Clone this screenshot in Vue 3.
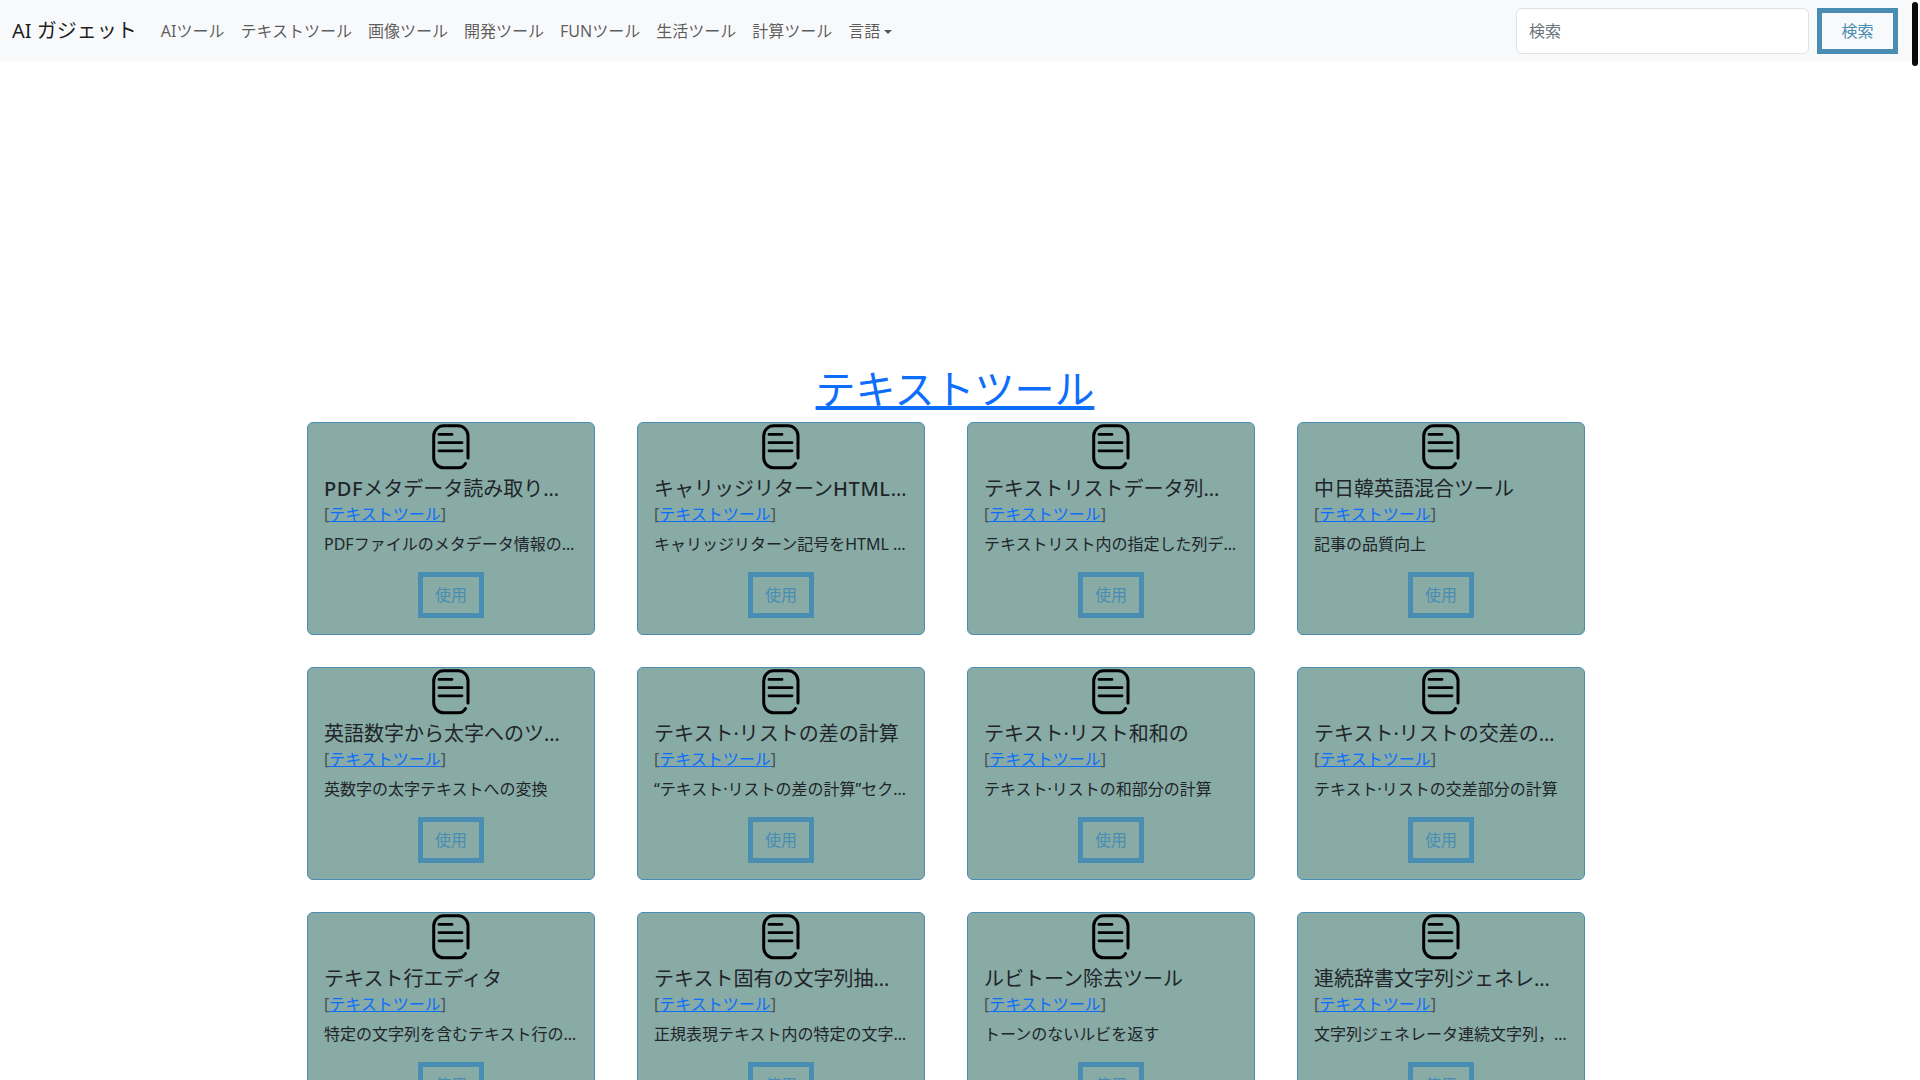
<template>
  <div class="page">
    <nav class="navbar">
      <a class="brand" href="#">AI ガジェット</a>
      <ul class="nav-list">
        <li v-for="item in navItems" :key="item"><a class="nav-link" href="#">{{ item }}</a></li>
        <li>
          <a class="nav-link dropdown" href="#">言語<span class="caret"></span></a>
        </li>
      </ul>
      <form class="search" @submit.prevent>
        <input class="search-input" type="search" placeholder="検索" />
        <button class="outline-btn search-btn" type="submit">検索</button>
      </form>
    </nav>

    <div class="ad-slot"></div>

    <main class="content">
      <h1 class="page-title"><a href="#">テキストツール</a></h1>
      <div class="tool-grid">
        <div v-for="tool in tools" :key="tool.title" class="tool-card">
          <svg class="tool-icon" viewBox="0 0 48 48" fill="none" stroke="#000" stroke-width="3" stroke-linecap="round">
            <path d="M38.500 40.500c-1.500 2.600-3.500 4.300-6.500 4.300H16.700a10 10 0 0 1-10-10V12.800a10 10 0 0 1 10-10H31a10 10 0 0 1 10 10V35" />
            <path d="M12 11.400h13M12 19.700h23M12 27.800h23" stroke-width="2.800" />
          </svg>
          <h5 class="tool-title">
            <span v-for="(part, i) in splitLatin(tool.title)" :key="i" :class="{ latin: i % 2 === 1 }">{{ part }}</span>
          </h5>
          <div class="tool-tag">[<a href="#">テキストツール</a>]</div>
          <p class="tool-desc">{{ tool.desc }}</p>
          <div class="tool-action">
            <button class="outline-btn" type="button">使用</button>
          </div>
        </div>
      </div>
    </main>

    <div class="scroll-thumb"></div>
  </div>
</template>

<script setup>
const navItems = ['AIツール', 'テキストツール', '画像ツール', '開発ツール', 'FUNツール', '生活ツール', '計算ツール']

const tools = [
  { title: 'PDFメタデータ読み取りツール', desc: 'PDFファイルのメタデータ情報の読み取り' },
  { title: 'キャリッジリターンHTML変換', desc: 'キャリッジリターン記号をHTML タグに変換' },
  { title: 'テキストリストデータ列抽出', desc: 'テキストリスト内の指定した列データの抽出' },
  { title: '中日韓英語混合ツール', desc: '記事の品質向上' },
  { title: '英語数字から太字へのツール', desc: '英数字の太字テキストへの変換' },
  { title: 'テキスト·リストの差の計算', desc: '“テキスト·リストの差の計算”セクション' },
  { title: 'テキスト·リスト和和の', desc: 'テキスト·リストの和部分の計算' },
  { title: 'テキスト·リストの交差の計算', desc: 'テキスト·リストの交差部分の計算' },
  { title: 'テキスト行エディタ', desc: '特定の文字列を含むテキスト行の抽出' },
  { title: 'テキスト固有の文字列抽出ツール', desc: '正規表現テキスト内の特定の文字列の抽出' },
  { title: 'ルビトーン除去ツール', desc: 'トーンのないルビを返す' },
  { title: '連続辞書文字列ジェネレータ', desc: '文字列ジェネレータ連続文字列，辞書順' },
]

// Latin runs are medium weight in the titles, the Japanese stays regular
const splitLatin = (text) => text.split(/([A-Za-z]+)/)
</script>

<style scoped>
.page {
  position: relative;
  height: 1080px;
  overflow: hidden;
  background: #fff;
  color: #212529;
  font-family: "Noto Sans", "Noto Sans CJK JP", sans-serif;
  font-size: 16px;
  line-height: 24px;
}

.navbar {
  display: flex;
  align-items: center;
  height: 62px;
  box-sizing: border-box;
  padding: 0 22px 0 12px;
  background: #f8f9fa;
}

.brand {
  margin-right: 16px;
  font-size: 20px;
  color: rgba(0, 0, 0, 0.9);
  text-decoration: none;
  white-space: nowrap;
}

.nav-list {
  display: flex;
  flex: 1;
  margin: 0;
  padding: 0;
  list-style: none;
}

.nav-link {
  display: block;
  padding: 8px;
  color: rgba(0, 0, 0, 0.65);
  text-decoration: none;
  white-space: nowrap;
}

.caret {
  display: inline-block;
  margin-left: 4px;
  vertical-align: 3px;
  border-top: 4px solid;
  border-right: 4px solid transparent;
  border-left: 4px solid transparent;
}

.search {
  display: flex;
  gap: 8px;
}

.search-input {
  width: 293px;
  height: 46px;
  box-sizing: border-box;
  padding: 6px 12px;
  border: 1px solid #dee2e6;
  border-radius: 6px;
  background: #fff;
  color: #212529;
  font: inherit;
  outline: none;
}

.search-input::placeholder {
  color: #6c757d;
}

.outline-btn {
  box-sizing: border-box;
  height: 46px;
  padding: 6px 12px;
  border: 5px solid #4a8db3;
  border-radius: 0;
  background: transparent;
  color: #4a8db3;
  font: inherit;
  cursor: pointer;
}

.search-btn {
  width: 81px;
}

.ad-slot {
  height: 303px;
}

.content {
  width: 1910px;
}

.page-title {
  margin: 0 0 9px;
  font-size: 40px;
  font-weight: 400;
  line-height: 48px;
  text-align: center;
}

.page-title a,
.tool-tag a {
  color: #0d6efd;
  text-decoration: underline;
}

.tool-grid {
  display: grid;
  grid-template-columns: repeat(4, 288px);
  gap: 32px 42px;
  margin-left: 307px;
}

.tool-card {
  box-sizing: border-box;
  height: 213px;
  padding: 0 16px;
  border: 1px solid #4a8db3;
  border-radius: 6px;
  background: #88aba5;
}

.tool-icon {
  display: block;
  width: 48px;
  height: 48px;
  margin: 0 auto;
}

.tool-title {
  margin: 3px 0 0;
  overflow: hidden;
  font-size: 20px;
  font-weight: 400;
  line-height: 30px;
  white-space: nowrap;
  text-overflow: ellipsis;
}

.latin {
  font-weight: 500;
  letter-spacing: 0.6px;
}

.tool-tag {
  margin-top: -2px;
  color: #495057;
}

.tool-desc {
  margin: 6px 0 0;
  overflow: hidden;
  white-space: nowrap;
  text-overflow: ellipsis;
}

.tool-action {
  display: flex;
  justify-content: center;
  margin-top: 16px;
}

.scroll-thumb {
  position: absolute;
  top: 2px;
  right: 2px;
  width: 6px;
  height: 64px;
  border-radius: 3px;
  background: #0a0a0a;
}
</style>

<style>
html,
body {
  margin: 0;
  overflow: hidden;
}
</style>
